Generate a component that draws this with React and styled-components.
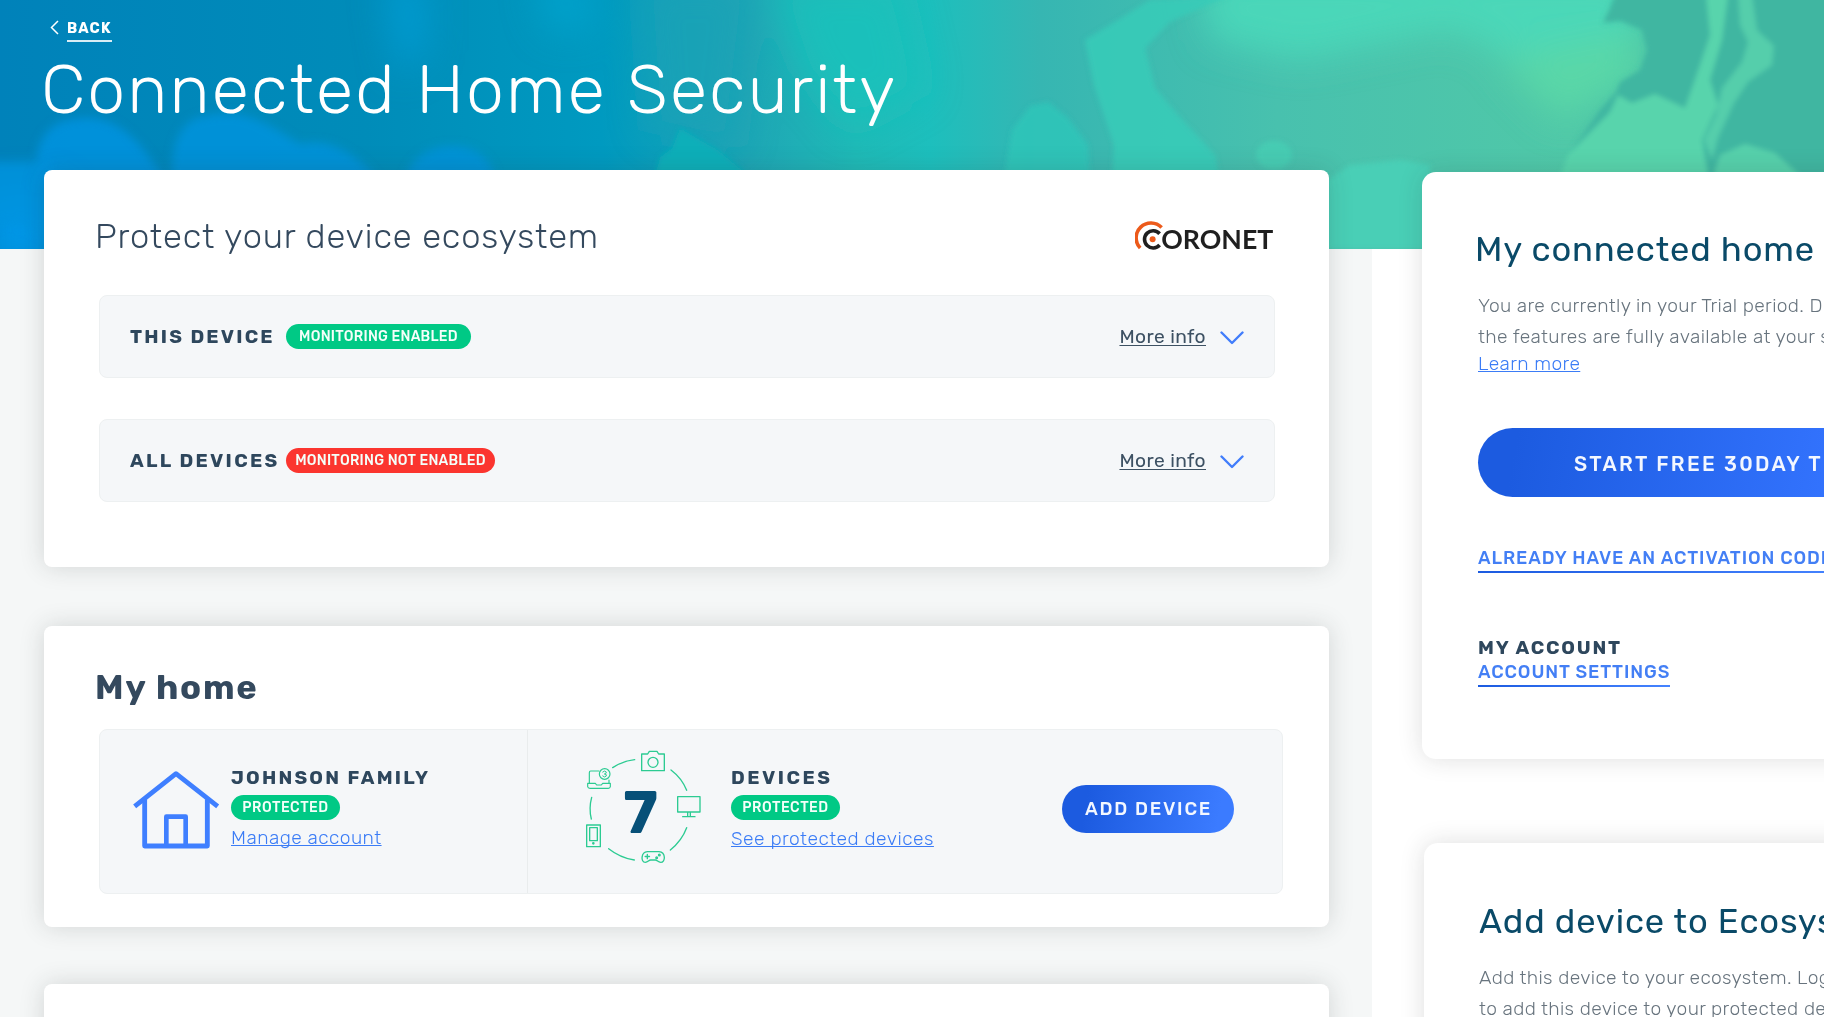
import React from "react";
import styled, { createGlobalStyle } from "styled-components";

const GlobalStyle = createGlobalStyle`
  *, *::before, *::after { box-sizing: border-box; }
  html, body { margin: 0; padding: 0; overflow: hidden; }
  body { font-family: Rubik, Roboto, "Liberation Sans", sans-serif; color: #2e475d; background: #fff; }
  h1, h2, h3, p { margin: 0; font-weight: inherit; }
`;

const Page = styled.div`
  position: relative;
  width: 1824px;
  height: 1017px;
  overflow: hidden;
  background: linear-gradient(90deg, #f5f7f7 1372px, #ffffff 1372px);
`;

const HeroArt = styled.svg`
  position: absolute;
  top: 0;
  left: 0;
  width: 1824px;
  height: 249px;
`;

const Content = styled.div`
  position: relative;
  padding-left: 44px;
`;

const Header = styled.header`
  height: 170px;
  padding-top: 16px;
  color: #fff;
`;

const BackLink = styled.a`
  display: flex;
  align-items: flex-start;
  gap: 8px;
  height: 26px;
  padding-left: 6px;
  svg { margin-top: 4px; }
  span {
    line-height: 24px;
    font-size: 14.5px;
    font-weight: 700;
    letter-spacing: 1.2px;
    border-bottom: 2px solid rgba(255, 255, 255, 0.85);
  }
`;

const PageTitle = styled.h1`
  margin: 8px 0 0 -3px;
  font-size: 68px;
  line-height: 80px;
  font-weight: 300;
  letter-spacing: 2.08px;
  white-space: nowrap;
`;

const Columns = styled.div`
  display: grid;
  grid-template-columns: 1285px 560px;
  column-gap: 93px;
`;

const Card = styled.section`
  height: ${(p) => p.$height}px;
  margin-bottom: ${(p) => p.$gap || 0}px;
  padding: ${(p) => p.$padding || "0"};
  background: #fff;
  border-radius: 8px;
  box-shadow: 0 0 24px rgba(40, 50, 50, 0.17);
`;

const SideCard = styled(Card)`
  border-radius: 14px;
  margin-top: ${(p) => p.$top || 0}px;
  margin-left: ${(p) => p.$left || 0}px;
  box-shadow: 0 0 24px rgba(40, 40, 40, 0.15);
  white-space: nowrap;
`;

const CardHead = styled.div`
  display: flex;
  align-items: center;
  justify-content: space-between;
  height: 40px;
  margin-bottom: ${(p) => p.$gap}px;
`;

const CardTitle = styled.h2`
  font-size: 34.5px;
  line-height: 40px;
  margin-left: -4px;
  font-weight: ${(p) => p.$weight || 300};
  letter-spacing: ${(p) => p.$spacing || 0.84}px;
  color: #34495e;
  white-space: nowrap;
`;

const MonitorRow = styled.div`
  display: flex;
  align-items: center;
  height: 83px;
  margin-bottom: 41px;
  padding: 0 30px 0 30px;
  background: #f5f7f9;
  border: 1px solid #edf0f1;
  border-radius: 8px;
`;

const Label = styled.h3`
  width: ${(p) => (p.$width ? p.$width + "px" : "auto")};
  font-size: 19.2px;
  line-height: 24px;
  font-weight: 700;
  letter-spacing: ${(p) => p.$spacing || 2.25}px;
  white-space: nowrap;
`;

const Pill = styled.span`
  display: flex;
  align-items: center;
  justify-content: center;
  width: ${(p) => p.$width}px;
  height: 25px;
  margin-top: ${(p) => p.$top || 0}px;
  margin-bottom: ${(p) => p.$bottom || 0}px;
  border-radius: 13px;
  background: ${(p) => (p.$alert ? "#fb352f" : "#00c985")};
  color: #f4fffa;
  font-size: ${(p) => p.$size || 14}px;
  font-weight: 500;
  letter-spacing: ${(p) => p.$spacing || 0.25}px;
  white-space: nowrap;
`;

const TextLink = styled.a`
  font-size: 19.2px;
  line-height: 24px;
  font-weight: ${(p) => (p.$dark ? 400 : 300)};
  letter-spacing: ${(p) => p.$spacing || 0.38}px;
  color: ${(p) => (p.$dark ? "#3d5163" : "#3b7cf6")};
  text-decoration: underline;
  text-decoration-thickness: 1px;
  text-decoration-skip-ink: none;
  text-underline-offset: ${(p) => (p.$dark ? 2 : 1)}px;
  white-space: nowrap;
`;

const MoreInfo = styled.div`
  display: flex;
  align-items: center;
  gap: 14px;
  margin-left: auto;
  ${TextLink} { position: relative; }
  svg { margin-top: 3px; }
`;

const HomePanel = styled.div`
  display: flex;
  height: 165px;
  background: #f5f7f9;
  border: 1px solid #edf0f1;
  border-radius: 8px;
`;

const FamilyCell = styled.div`
  display: flex;
  gap: 11px;
  width: 428px;
  padding: 36px 0 0 32px;
  border-right: 1px solid #e9eced;
  svg { margin-top: 4px; }
`;

const DevicesCell = styled.div`
  display: flex;
  flex: 1;
  padding: 0 48px 0 32px;
`;

const Stack = styled.div`
  display: flex;
  flex-direction: column;
  align-items: flex-start;
  padding: ${(p) => p.$padding || "0"};
`;

const AddButton = styled.button`
  align-self: flex-start;
  width: 172px;
  height: 48px;
  margin: 55px 0 0 auto;
  padding: 0 0 0 1px;
  border: 0;
  border-radius: 24px;
  background: linear-gradient(100deg, #1c5be0 15%, #3b7bff 90%);
  color: #f3f7ff;
  font: 500 18.5px/48px Rubik, Roboto, sans-serif;
  letter-spacing: 1.75px;
`;

const SideTitle = styled.h2`
  margin-bottom: 20px;
  margin-left: ${(p) => p.$left || 0}px;
  font-size: 34.5px;
  line-height: 40px;
  font-weight: 400;
  letter-spacing: ${(p) => p.$spacing || 0.85}px;
  color: #0a4a68;
`;

const Body = styled.p`
  font-size: 19.2px;
  line-height: 31px;
  font-weight: 300;
  letter-spacing: ${(p) => p.$spacing || 0.35}px;
  color: #68747e;
`;

const TrialButton = styled.button`
  display: block;
  width: 494px;
  height: 69px;
  margin: 52px 0 49px;
  padding: 3px 0 0 96px;
  border: 0;
  border-radius: 35px;
  background: linear-gradient(100deg, #1c5be0 8%, #3474ff 75%);
  color: #f3f7ff;
  font: 500 20.5px/24px Rubik, Roboto, sans-serif;
  letter-spacing: 2.3px;
  text-align: left;
`;

const CapsLink = styled.a`
  display: block;
  width: fit-content;
  padding-bottom: 3px;
  margin-bottom: ${(p) => p.$gap || 0}px;
  font-size: 18.2px;
  line-height: 24px;
  font-weight: 500;
  letter-spacing: 0.88px;
  color: #437ff5;
  background: linear-gradient(90deg, #1c5be0, #4583ff) left bottom / 100% 2.5px no-repeat;
`;

const Hero = () => (
  <HeroArt viewBox="0 0 1824 249" preserveAspectRatio="none">
    <defs>
      <linearGradient id="base" x1="0" x2="1">
        <stop offset="0" stopColor="#0082ba" />
        <stop offset="0.2" stopColor="#008cb9" />
        <stop offset="0.33" stopColor="#009ac0" />
        <stop offset="0.41" stopColor="#1ea6b5" />
        <stop offset="0.47" stopColor="#20bab7" />
        <stop offset="0.51" stopColor="#1dbfbd" />
        <stop offset="0.57" stopColor="#36b6b2" />
        <stop offset="0.7" stopColor="#48c1ae" />
        <stop offset="0.86" stopColor="#50c8a8" />
        <stop offset="1" stopColor="#42b9a2" />
      </linearGradient>
      <filter id="soft" x="-50%" y="-50%" width="200%" height="200%"><feGaussianBlur stdDeviation="5" /></filter>
      <filter id="mist" x="-50%" y="-50%" width="200%" height="200%"><feGaussianBlur stdDeviation="18" /></filter>
      <filter id="edge" x="-20%" y="-20%" width="140%" height="140%"><feGaussianBlur stdDeviation="2.5" /></filter>
    </defs>
    <rect width="1824" height="249" fill="url(#base)" />
    <g filter="url(#mist)">
      <path d="M385 -20H425V50L400 75Z" fill="#009bd2" />
      <path d="M535 -20H590V30H550Z" fill="#00a2cc" />
      <path d="M640 -20H755L735 150L650 130Z" fill="#20a3b5" opacity="0.7" />
      <path d="M770 -20H900L925 90L850 130L800 70Z" fill="#1ac2bb" opacity="0.8" />
      <path d="M1200 -30H1640V90L1540 70L1450 30L1300 60L1210 40Z" fill="#4bdabb" opacity="0.85" />
      <path d="M1500 60L1640 30V80L1560 120Z" fill="#5ad7a7" />
      <path d="M-20 190H60V270H-20Z" fill="#0096e6" />
    </g>
    <g filter="url(#soft)" fill="#0093df">
      <path d="M38 175C32 145 48 120 75 119C110 112 135 135 155 165L170 185H30Z" opacity="0.85" />
      <path d="M172 185C170 145 180 118 205 116C245 105 275 128 300 144C325 138 355 150 378 180Z" opacity="0.8" />
      <path d="M405 180C410 158 430 145 454 146C480 147 493 162 496 182Z" opacity="0.75" />
      <path d="M-15 162H50V238L10 220L-15 232Z" opacity="0.8" />
    </g>
    <g filter="url(#edge)">
      <path d="M655 175L660 157L672 148L680 128L700 140L718 150L748 175Z" fill="#08afb9" />
      <path d="M1085 40L1115 22L1150 0L1230 -5L1170 22L1145 48L1155 88L1178 115L1215 155L1220 180H1112L1114 145L1094 85Z" fill="#36cbb8" opacity="0.9" />
      <path d="M1004 178L1012 130L1030 106L1048 102L1068 118L1088 145L1090 178Z" fill="#2ec6b9" opacity="0.85" />
      <ellipse cx="1274" cy="155" rx="18" ry="14" fill="#47ccb3" />
      <path d="M1328 180L1350 165L1400 160L1430 165V249H1328Z" fill="#48cfb6" />
    </g>
    <g filter="url(#edge)">
      <path d="M1616 -8H1832V180H1560L1572 150L1600 110L1616 92L1620 82L1640 70L1647 50L1642 30L1620 21L1603 23L1610 8Z" fill="#40b6a1" />
      <path d="M1558 182L1568 155L1610 112L1618 95L1632 103L1655 94L1685 108L1700 65L1710 35L1706 -5H1728L1722 40L1710 80L1718 105L1702 140L1708 175Z" fill="#58d4ac" />
      <path d="M1738 -5H1752L1757 30L1774 46L1772 65L1748 82L1734 103L1718 138L1712 160L1704 140L1716 115L1722 88L1742 62L1748 42L1740 25Z" fill="#55ceab" />
      <path d="M1712 180L1720 155L1745 144L1775 153L1805 180Z" fill="#57d0ab" />
    </g>
  </HeroArt>
);

const Chevron = () => (
  <svg width="24" height="14" viewBox="0 0 24 14" fill="none" stroke="#417dfb" strokeWidth="2.4" strokeLinecap="round" strokeLinejoin="round">
    <path d="M1.5 1.5L12 12L22.5 1.5" />
  </svg>
);

const CoronetLogo = () => (
  <svg width="140" height="32" viewBox="0 0 140 32" fill="none">
    <path d="M5.2 27A14 14 0 1 1 26.6 6.6" stroke="#ec5a1a" strokeWidth="3.6" />
    <path d="M24.6 12.7A8.6 8.6 0 1 0 24.6 24" stroke="#1f1f1f" strokeWidth="3.6" />
    <circle cx="17.6" cy="18.3" r="3" fill="#ec5a1a" />
    <text x="26.3" y="28" fill="#1f1f1f" fontFamily="Lato, sans-serif" fontWeight="700" fontSize="26.5" textLength="112" lengthAdjust="spacingAndGlyphs">ORONET</text>
  </svg>
);

const HouseIcon = () => (
  <svg width="88" height="80" viewBox="306 480 264 240" fill="none" stroke="#3f7fff" strokeWidth="14.5" strokeLinejoin="round">
    <path d="M314 589L438 491L563 589" />
    <path d="M344 568V708H532V568" />
    <path d="M409 706V620H467V706" strokeWidth="14" />
  </svg>
);

const DeviceRing = () => (
  <svg width="160" height="150" viewBox="0 3 480 450" fill="none" stroke="#2ccb92" strokeWidth="4" strokeLinecap="round" strokeLinejoin="round">
    <path d="M158 116Q188 96 224 92" />
    <path d="M333 123Q366 148 380 184" />
    <path d="M380 296Q366 334 331 363" />
    <path d="M146 359Q180 386 223 393" />
    <path d="M95 205Q86 238 94 270" />
    <path d="M245 75H263L268 67H291L296 75H313V125H245Z" />
    <circle cx="279" cy="100" r="15" />
    <path d="M353 203H420V249H353ZM383 250V262M391 250V262M368 263H405" />
    <path d="M80 288H121V353H80ZM89 296H112V335H89Z" />
    <circle cx="100" cy="343" r="2" />
    <path d="M262 368H297C318 370 317 400 302 400C294 400 292 393 286 393H272C266 393 264 400 256 400C241 400 243 369 262 368ZM262 376V389M255.5 382.5H268.500" />
    <circle cx="290" cy="386" r="2.500" />
    <circle cx="298" cy="378" r="2.500" />
    <path d="M117 126H92Q88 126 88 131V163M147 153V163M83 163H106L110 168H124L128 163H151V173Q150 178 145 178H90Q84 178 83 173Z" strokeWidth="3.500" />
    <circle cx="134" cy="135" r="16" strokeWidth="3.500" />
    <path d="M128 129Q134 123 139 129Q139 135 133 135Q141 135 139 141Q134 147 128 141" strokeWidth="3" />
    <text x="242" y="312" textAnchor="middle" fill="#075078" stroke="none" fontFamily="Rubik, Roboto, sans-serif" fontWeight="700" fontSize="181" textLength="104" lengthAdjust="spacingAndGlyphs">7</text>
  </svg>
);

const Monitor = ({ label, spacing, children }) => (
  <MonitorRow>
    <Label $width={156} $spacing={spacing}>{label}</Label>
    {children}
    <MoreInfo>
      <TextLink $dark>More info</TextLink>
      <Chevron />
    </MoreInfo>
  </MonitorRow>
);

export default function App() {
  return (
    <>
      <GlobalStyle />
      <Page>
        <Hero />
        <Content>
          <Header>
            <BackLink>
              <svg width="9" height="15" viewBox="0 0 9 15" fill="none" stroke="#fff" strokeWidth="1.500">
                <path d="M8 1L1.500 7.500L8 14" />
              </svg>
              <span>BACK</span>
            </BackLink>
            <PageTitle>Connected Home Security</PageTitle>
          </Header>
          <Columns>
            <main>
              <Card $height={397} $gap={59} $padding="47px 54px 0 55px">
                <CardHead $gap={38}>
                  <CardTitle>Protect your device ecosystem</CardTitle>
                  <CoronetLogo />
                </CardHead>
                <Monitor label="THIS DEVICE" spacing={2.200}>
                  <Pill $width={185}>MONITORING ENABLED</Pill>
                </Monitor>
                <Monitor label="ALL DEVICES" spacing={2.300}>
                  <Pill $width={209} $alert>MONITORING NOT ENABLED</Pill>
                </Monitor>
              </Card>
              <Card $height={301} $gap={57} $padding="42px 46px 0 55px">
                <CardHead $gap={21}>
                  <CardTitle $weight={700} $spacing={1.750}>My home</CardTitle>
                </CardHead>
                <HomePanel>
                  <FamilyCell>
                    <HouseIcon />
                    <Stack>
                      <Label $spacing={2.200}>JOHNSON FAMILY</Label>
                      <Pill $width={109} $top={5} $bottom={6} $spacing={0.500}>PROTECTED</Pill>
                      <TextLink $spacing={0.450}>Manage account</TextLink>
                    </Stack>
                  </FamilyCell>
                  <DevicesCell>
                    <DeviceRing />
                    <Stack $padding="36px 0 0 11px">
                      <Label $spacing={2.500}>DEVICES</Label>
                      <Pill $width={109} $top={5} $bottom={7} $spacing={0.500}>PROTECTED</Pill>
                      <TextLink $spacing={0.480}>See protected devices</TextLink>
                    </Stack>
                    <AddButton>ADD DEVICE</AddButton>
                  </DevicesCell>
                </HomePanel>
              </Card>
              <Card $height={120} />
            </main>
            <aside>
              <SideCard $top={2} $height={587} $gap={84} $padding="58px 0 0 56px">
                <SideTitle $left={-3}>My connected home security</SideTitle>
                <Body>
                  You are currently in your Trial period. During this time all
                  <br />
                  the features are fully available at your service.
                </Body>
                <TextLink as="div" style={undefined}>Learn more</TextLink>
                <TrialButton>START FREE 30DAY TRIAL</TrialButton>
                <CapsLink $gap={63}>ALREADY HAVE AN ACTIVATION CODE?</CapsLink>
                <Label $spacing={1.800}>MY ACCOUNT</Label>
                <CapsLink>ACCOUNT SETTINGS</CapsLink>
              </SideCard>
              <SideCard $left={2} $height={260} $padding="59px 0 0 55px">
                <SideTitle>Add device to Ecosystem</SideTitle>
                <Body>
                  Add this device to your ecosystem. Log in
                  <br />
                  to add this device to your protected devices.
                </Body>
              </SideCard>
            </aside>
          </Columns>
        </Content>
      </Page>
    </>
  );
}
